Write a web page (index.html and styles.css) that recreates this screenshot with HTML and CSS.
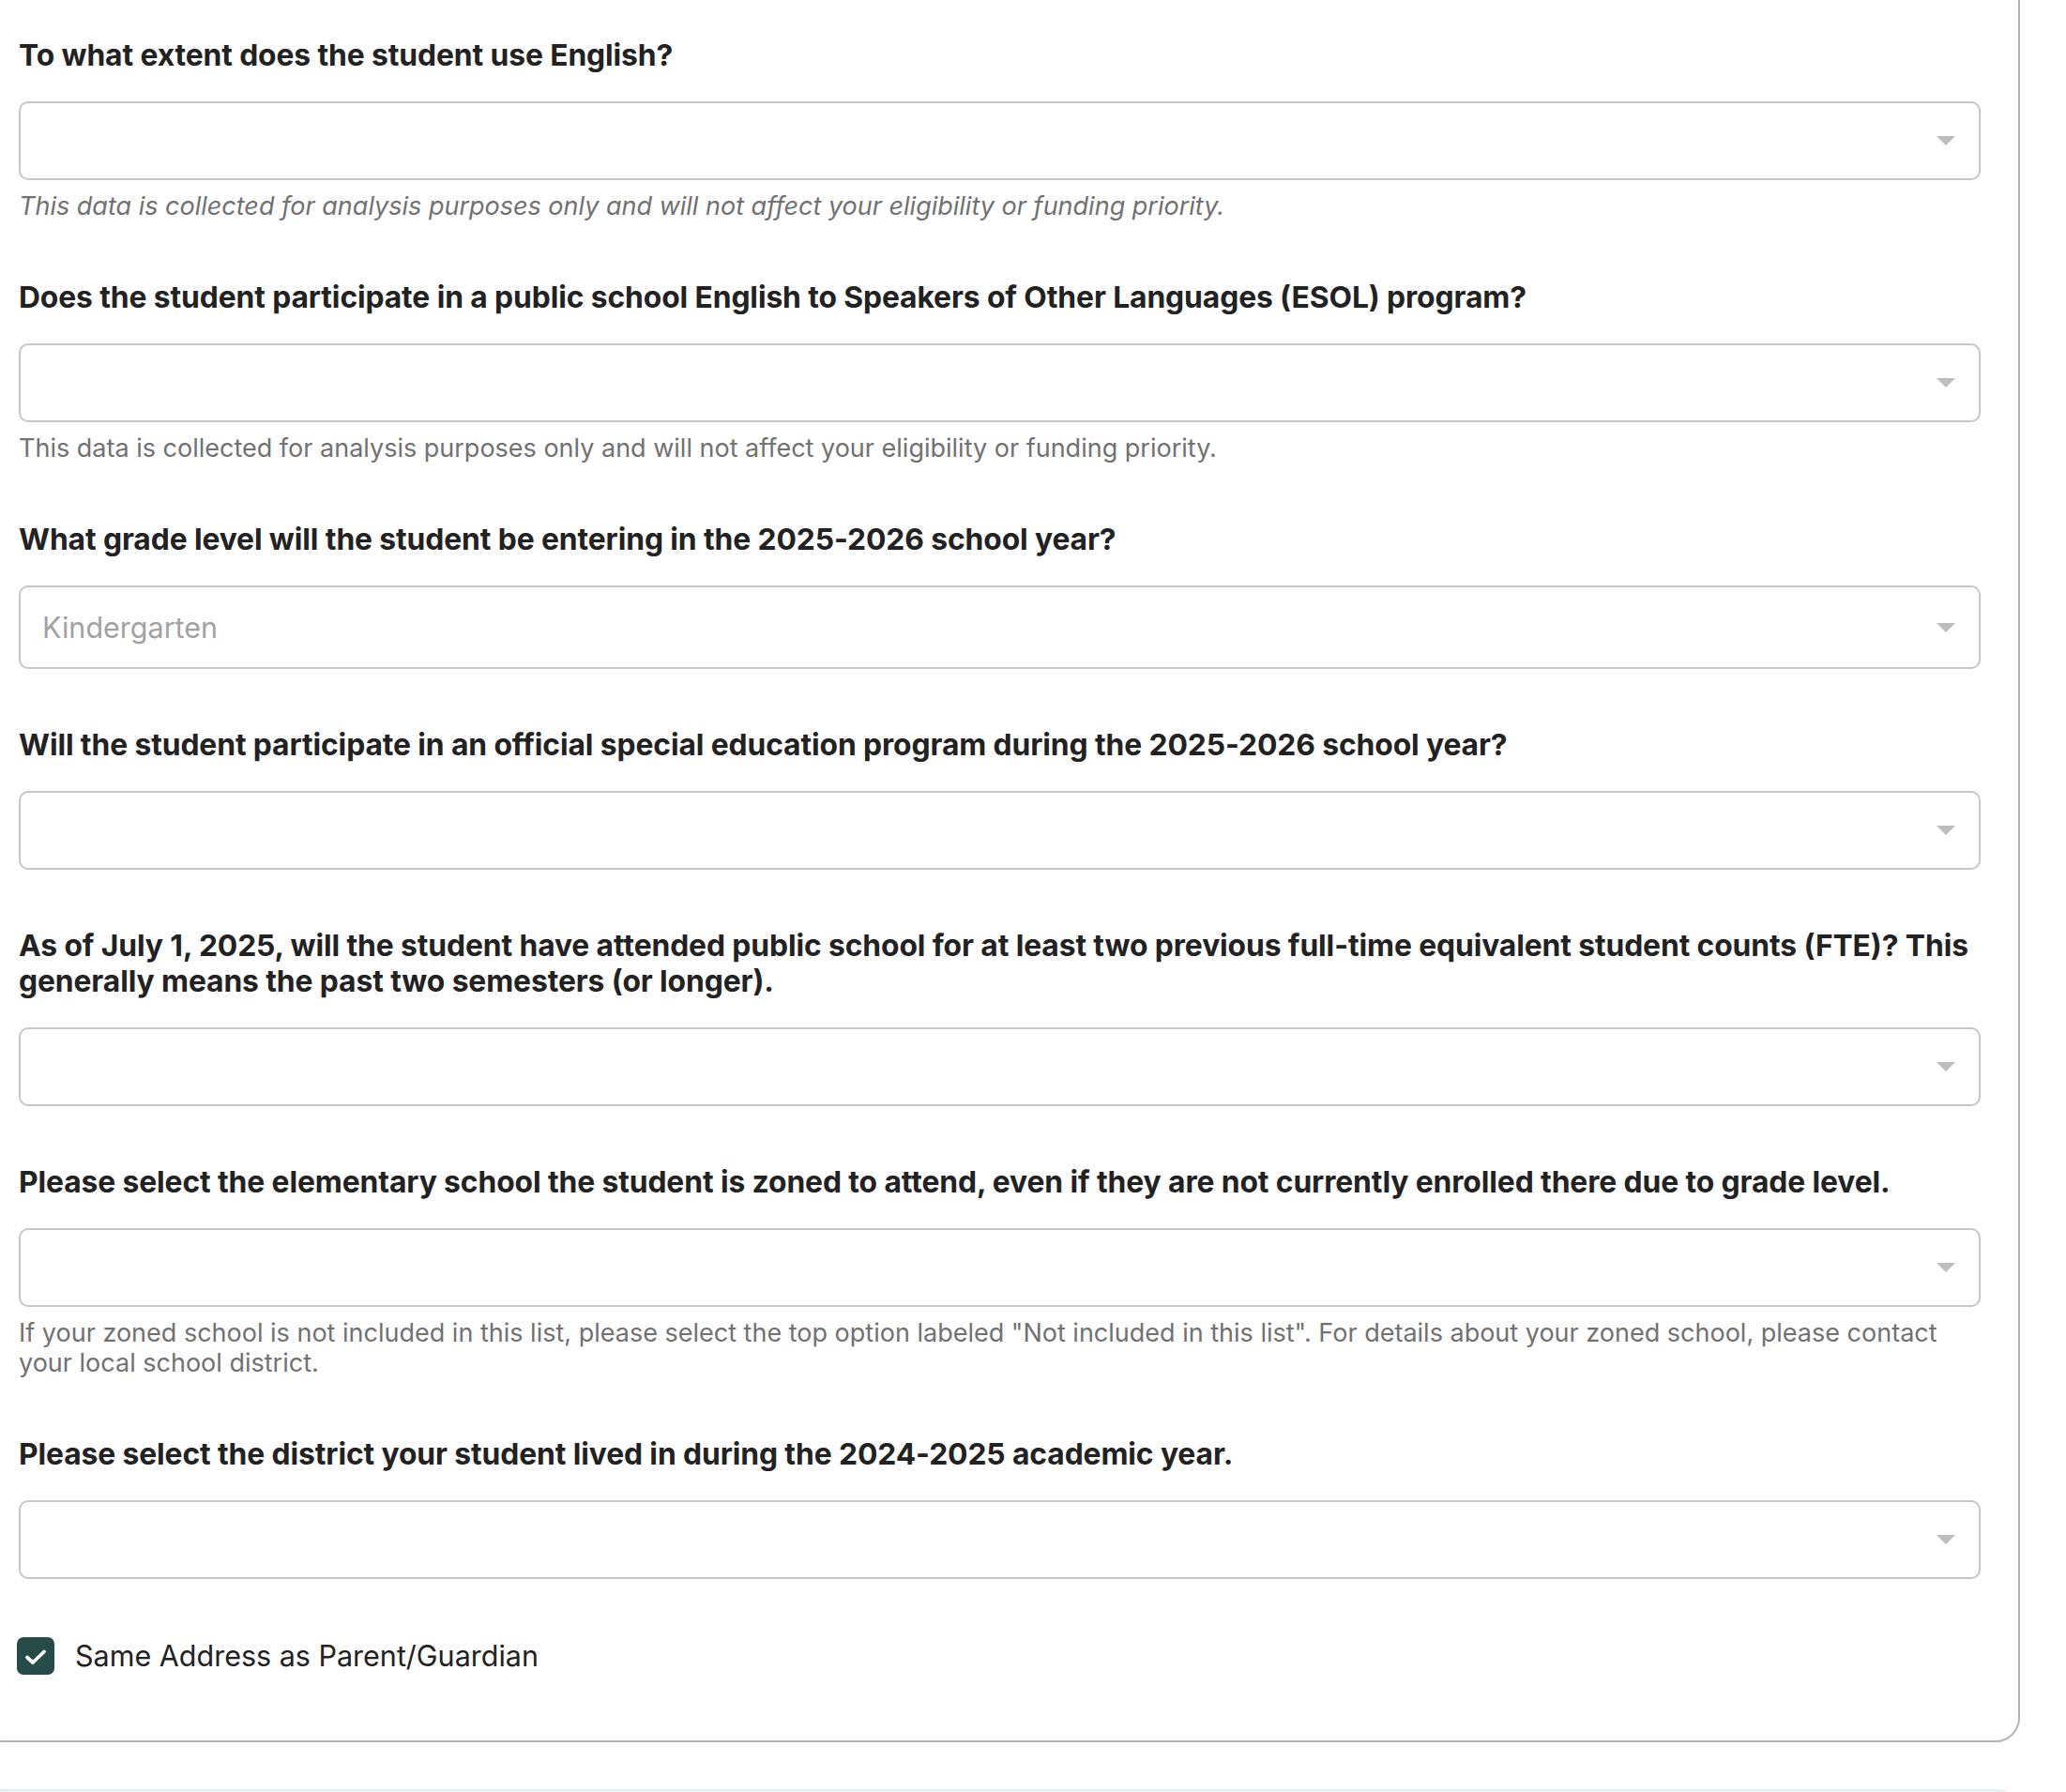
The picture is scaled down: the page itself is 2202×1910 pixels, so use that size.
FILE: index.html
```html
<!DOCTYPE html>
<html lang="en">
<head>
<meta charset="utf-8">
<title>Student Information</title>
<link rel="stylesheet" href="styles.css">
</head>
<body>
<main class="page">
  <section class="card">
    <div class="field">
      <label class="field-label">To what extent does the student use English?</label>
      <div class="select" role="combobox"><span class="select-value"></span><span class="select-arrow"></span></div>
      <p class="field-help field-help--italic">This data is collected for analysis purposes only and will not affect your eligibility or funding priority.</p>
    </div>
    <div class="field">
      <label class="field-label">Does the student participate in a public school English to Speakers of Other Languages (ESOL) program?</label>
      <div class="select" role="combobox"><span class="select-value"></span><span class="select-arrow"></span></div>
      <p class="field-help">This data is collected for analysis purposes only and will not affect your eligibility or funding priority.</p>
    </div>
    <div class="field">
      <label class="field-label">What grade level will the student be entering in the 2025-2026 school year?</label>
      <div class="select select--filled" role="combobox"><span class="select-value select-value--placeholder">Kindergarten</span><span class="select-arrow"></span></div>
    </div>
    <div class="field">
      <label class="field-label">Will the student participate in an official special education program during the 2025-2026 school year?</label>
      <div class="select" role="combobox"><span class="select-value"></span><span class="select-arrow"></span></div>
    </div>
    <div class="field">
      <label class="field-label">As of July 1, 2025, will the student have attended public school for at least two previous full-time equivalent student counts (FTE)? This generally means the past two semesters (or longer).</label>
      <div class="select" role="combobox"><span class="select-value"></span><span class="select-arrow"></span></div>
    </div>
    <div class="field">
      <label class="field-label">Please select the elementary school the student is zoned to attend, even if they are not currently enrolled there due to grade level.</label>
      <div class="select" role="combobox"><span class="select-value"></span><span class="select-arrow"></span></div>
      <p class="field-help">If your zoned school is not included in this list, please select the top option labeled "Not included in this list". For details about your zoned school, please contact your local school district.</p>
    </div>
    <div class="field">
      <label class="field-label">Please select the district your student lived in during the 2024-2025 academic year.</label>
      <div class="select" role="combobox"><span class="select-value"></span><span class="select-arrow"></span></div>
    </div>
    <label class="checkbox">
      <span class="checkbox-box">
        <svg class="checkbox-mark" viewBox="0 0 24 18" width="24" height="18" aria-hidden="true"><path d="M3 9.5 L9 15 L21 3.5" fill="none" stroke="#ffffff" stroke-width="3.8" stroke-linecap="round" stroke-linejoin="round"/></svg>
      </span>
      <span class="checkbox-label">Same Address as Parent/Guardian</span>
    </label>
  </section>
  <section class="next-card"></section>
</main>
</body>
</html>
```

FILE: styles.css
```css
* {
  box-sizing: border-box;
}

html, body {
  margin: 0;
  padding: 0;
  background: #ffffff;
}

body {
  font-family: Inter, "Noto Sans", "Liberation Sans", sans-serif;
  color: #222222;
  overflow: hidden;
}

.page {
  display: flex;
  flex-direction: column;
}

.card {
  margin: -40px 49px 0 -22px;
  padding: 78px 40px 70px 40px;
  border: 2px solid #b4b4b4;
  border-radius: 26px;
  display: flex;
  flex-direction: column;
  gap: 62px;
}

.field {
  display: flex;
  flex-direction: column;
}

.field-label {
  font-size: 31.8px;
  font-weight: 700;
  line-height: 38px;
  letter-spacing: -0.1px;
  color: #222222;
  margin-bottom: 30px;
}

.select {
  height: 84px;
  border: 2px solid #c6c6c6;
  border-radius: 10px;
  display: flex;
  align-items: center;
  justify-content: space-between;
  padding: 0 25px 0 23px;
  background: #ffffff;
}

.select--filled {
  height: 89px;
}

.select-value {
  font-size: 30.5px;
  line-height: 38px;
}

.select-value--placeholder {
  color: #a2a2a2;
}

.select-arrow {
  width: 0;
  height: 0;
  border-left: 10px solid transparent;
  border-right: 10px solid transparent;
  border-top: 10px solid #bdbdbd;
}

.field-help {
  margin: 12px 0 0 0;
  font-size: 27px;
  line-height: 32px;
  color: #717171;
}

.field-help--italic {
  font-style: italic;
}

.checkbox {
  display: flex;
  align-items: center;
  gap: 22px;
  margin-left: -2px;
}

.checkbox-box {
  width: 40px;
  height: 40px;
  border-radius: 7px;
  background: #264b48;
  display: flex;
  align-items: center;
  justify-content: center;
}

.checkbox-mark {
  display: block;
  margin-top: 2px;
}

.checkbox-label {
  font-size: 30.5px;
  line-height: 38px;
  color: #222222;
}

.next-card {
  margin: 50px 49px 0 -22px;
  height: 120px;
  border-top: 2px solid #d6f0ee;
  border-radius: 26px 26px 0 0;
  background: #f3fbfa;
}
```
